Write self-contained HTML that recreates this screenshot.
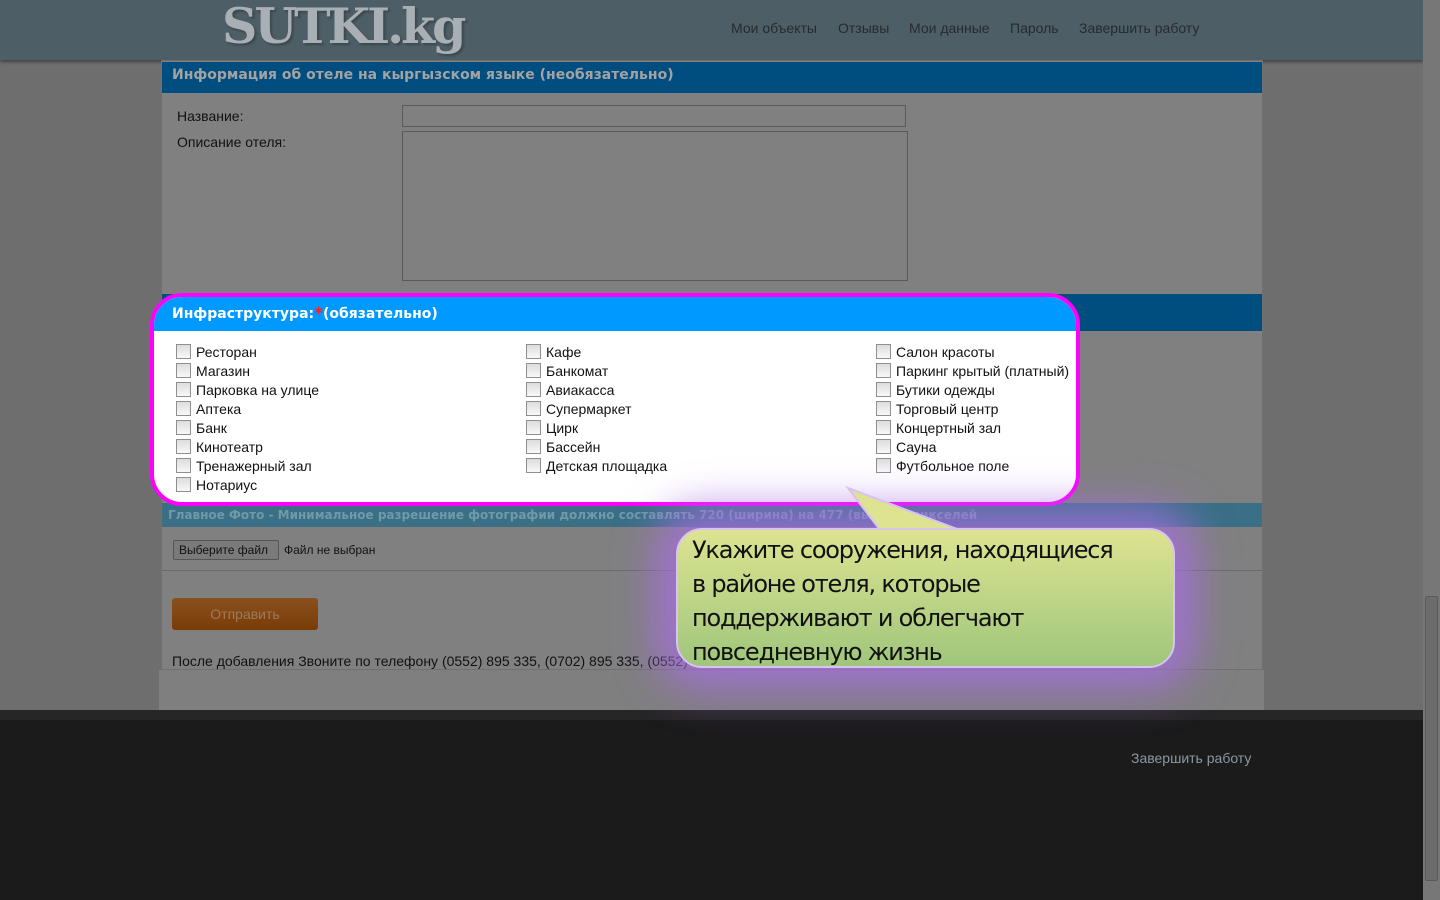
<!DOCTYPE html>
<html><head><meta charset="utf-8">
<style>
*{margin:0;padding:0;box-sizing:border-box}
body{width:1440px;height:900px;overflow:hidden;background:#6e6e6e;font-family:"Liberation Sans",Arial,sans-serif;position:relative}
.abs{position:absolute}
.hdr{left:0;top:0;width:1423px;height:60px;background:#4e5e67;box-shadow:0 2px 3px rgba(0,0,0,.4)}
.logo{left:222px;top:-3px;font:bold 49px "DejaVu Serif","Liberation Serif",serif;color:#a9b0b5;letter-spacing:-3px;text-shadow:2px 2px 2px #3c474d}
.nav{top:20px;font-size:14px;color:#252b2e}
.cont{left:161px;top:60px;width:1102px;height:610px;background:#808080;border:1px solid #707070}
.ext{left:159px;top:670px;width:1105px;height:40px;background:#7f7f7f}
.bh{left:162px;top:62px;width:1100px;height:31px;background:#004e7f;color:#a3a3a3;font:bold 14px "DejaVu Sans",sans-serif;padding:5px 10px}
.lbl{font-size:14px;color:#111}
.inp{background:#808080;border:1px solid #5a5a5a}
.scroll{left:1423px;top:0;width:17px;height:900px;background:#777}
.foot{left:0;top:710px;width:1423px;height:190px;background:#1b1b1b;border-top:10px solid #262626}
.hl{left:150px;top:293px;width:930px;height:213px;background:#fff;border:4px solid #f0f;border-radius:32px;overflow:hidden}
.hl .h{height:34px;background:#0099ff;color:#fff;font:bold 14px "DejaVu Sans",sans-serif;padding:7px 18px;white-space:nowrap}
.col{position:absolute;top:46px;font-size:14px;color:#111;line-height:19px}
.col div{position:relative;padding-left:20px}
.col div:before{content:"";position:absolute;left:0;top:1px;width:13px;height:13px;border:1px solid #8f8f8f;background:linear-gradient(#ddd,#f8f8f8)}
</style></head><body>
<div class="abs hdr"></div>
<div class="abs logo">SUTKI.kg</div>
<div class="abs nav" style="left:731px">Мои объекты</div>
<div class="abs nav" style="left:838px">Отзывы</div>
<div class="abs nav" style="left:909px">Мои данные</div>
<div class="abs nav" style="left:1010px">Пароль</div>
<div class="abs nav" style="left:1079px">Завершить работу</div>

<div class="abs cont"></div>
<div class="abs ext"></div>
<div class="abs bh">Информация об отеле на кыргызском языке (необязательно)</div>
<div class="abs lbl" style="left:177px;top:108px">Название:</div>
<div class="abs lbl" style="left:177px;top:134px">Описание отеля:</div>
<div class="abs inp" style="left:402px;top:105px;width:504px;height:22px"></div>
<div class="abs inp" style="left:402px;top:131px;width:506px;height:150px"></div>
<div class="abs" style="left:162px;top:294px;width:1100px;height:37px;background:#004e7f"></div>

<div class="abs" style="left:162px;top:503px;width:1100px;height:24px;background:#3a6f85;color:#6f9aaa;font:bold 12px 'DejaVu Sans',sans-serif;padding:5px 6px;white-space:nowrap;overflow:hidden">Главное Фото - Минимальное разрешение фотографии должно составлять 720 (ширина) на 477 (высота) пикселей</div>
<div class="abs" style="left:173px;top:540px;width:106px;height:20px;border:1px solid #555;border-radius:2px;background:#7a7a7a;font-size:12px;color:#111;padding:2px 5px;white-space:nowrap;overflow:hidden">Выберите файл</div>
<div class="abs" style="left:284px;top:543px;font-size:12px;color:#111">Файл не выбран</div>
<div class="abs" style="left:162px;top:570px;width:1100px;height:1px;background:#6a6a6a"></div>
<div class="abs" style="left:172px;top:598px;width:146px;height:32px;border-radius:3px;background:linear-gradient(#8a5020,#7a3c06);color:#9c7a5c;font-size:14px;text-align:center;line-height:32px">Отправить</div>
<div class="abs" style="left:172px;top:653px;font-size:14px;color:#111;white-space:nowrap">После добавления Звоните по телефону (0552) 895 335, (0702) 895 335, (0552) 895 335</div>

<div class="abs foot"></div>
<div class="abs" style="left:1131px;top:750px;font-size:14px;color:#8a98a0">Завершить работу</div>
<div class="abs scroll"><div style="position:absolute;left:2px;top:596px;width:13px;height:285px;background:#6c6c6c;border:1px solid #5a5a5a;border-radius:2px"></div></div>

<div class="abs hl">
<div class="h">Инфраструктура:<span style="color:#ff2020;font:bold 17px 'DejaVu Sans',sans-serif;vertical-align:-1px">*</span>(обязательно)</div>
<div class="col" style="left:22px"><div>Ресторан</div><div>Магазин</div><div>Парковка на улице</div><div>Аптека</div><div>Банк</div><div>Кинотеатр</div><div>Тренажерный зал</div><div>Нотариус</div></div>
<div class="col" style="left:372px"><div>Кафе</div><div>Банкомат</div><div>Авиакасса</div><div>Супермаркет</div><div>Цирк</div><div>Бассейн</div><div>Детская площадка</div></div>
<div class="col" style="left:722px"><div>Салон красоты</div><div>Паркинг крытый (платный)</div><div>Бутики одежды</div><div>Торговый центр</div><div>Концертный зал</div><div>Сауна</div><div>Футбольное поле</div></div>
</div>

<div class="abs" style="left:676px;top:528px;width:499px;height:140px;border-radius:26px;box-shadow:0 0 40px 22px rgba(170,110,230,.75)"></div>
<svg class="abs" style="left:830px;top:480px" width="140" height="60"><polygon points="18,8 50,50 130,50" fill="#dde391" stroke="#d9c0f5" stroke-width="2"/></svg>
<div class="abs" style="left:676px;top:528px;width:499px;height:140px;border-radius:26px;background:linear-gradient(#dde391,#9fc67c);border:2px solid #d8c2f2;padding:3px 14px;font:24px/34px 'DejaVu Sans','Liberation Sans',sans-serif;letter-spacing:-1.2px;color:#111">Укажите сооружения, находящиеся<br>в районе отеля, которые<br>поддерживают и облегчают<br>повседневную жизнь</div>
</body></html>
